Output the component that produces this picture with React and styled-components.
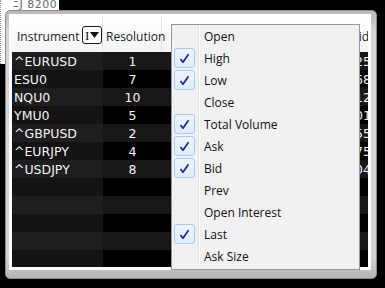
import React from 'react'
import styled, { createGlobalStyle } from 'styled-components'

const Global = createGlobalStyle`
  html, body {
    margin: 0;
    padding: 0;
    background: #000;
  }
`

const Screen = styled.div`
  position: relative;
  width: 385px;
  height: 288px;
  overflow: hidden;
  background: #000;
  padding-top: 10px;
  box-sizing: border-box;
`

const Backdrop = styled.div`
  position: absolute;
  left: 0;
  top: 0;
  width: 58px;
  height: 64px;
  background: #fff;
  border-left: 1px dotted #9a9a9a;
  overflow: hidden;

  span {
    position: absolute;
    left: 12px;
    top: -2px;
    font: 11px 'DejaVu Sans', sans-serif;
    color: #6a6a6a;
    letter-spacing: 0.5px;
  }
`

const Window = styled.div`
  position: relative;
  margin-left: 5px;
  width: 372px;
  height: 269px;
  box-sizing: border-box;
  padding: 3px 5px 8px 3px;
  border: 1px solid #8e8e8e;
  border-radius: 5px;
  background: linear-gradient(#b9b9b9, #d6d6d6 8%, #d2d2d2 92%, #b4b4b4);
`

const Pane = styled.div`
  height: 100%;
  box-sizing: border-box;
  padding: 3px;
  background: #fdfdfd;
`

const Grid = styled.div`
  width: 356px;
  height: 250px;
  overflow: hidden;
  display: flex;
  flex-direction: column;
`

const Header = styled.div`
  display: flex;
  height: 35px;
  flex: none;
  background: linear-gradient(#ffffff, #f4f4f4);
  font: 12px 'Open Sans', sans-serif;
  color: #1b1b1b;
`

const HeadCell = styled.div`
  width: ${p => p.$w}px;
  flex: none;
  display: flex;
  align-items: center;
  justify-content: ${p => p.$right ? 'flex-end' : 'flex-start'};
  gap: 3px;
  box-sizing: border-box;
  padding: 3px ${p => p.$pr || 0}px 0 ${p => p.$pl || 0}px;
  border-right: 1px solid #e3e3e3;
  white-space: nowrap;
`

const Picker = styled.div`
  width: 20px;
  height: 18px;
  box-sizing: border-box;
  border: 1.5px solid #1a1a1a;
  border-radius: 3px;
  background: #fff;
  display: flex;
  align-items: center;
  justify-content: center;
  gap: 1px;
  margin-top: -2px;

  b {
    font: 13px 'Liberation Serif', serif;
    color: #111;
    line-height: 1;
  }
`

const Row = styled.div`
  display: flex;
  height: 18px;
  flex: none;
  background: ${p => p.$odd ? '#000' : '#171717'};
  font: 12.5px 'DejaVu Sans', sans-serif;
  color: #f4f4f4;
`

const Cell = styled.div`
  width: ${p => p.$w}px;
  flex: none;
  display: flex;
  align-items: center;
  box-sizing: border-box;
  justify-content: ${p => p.$align || 'flex-start'};
  padding: 1px ${p => p.$pr || 0}px 0 ${p => p.$pl || 0}px;
  background: ${p => p.$bg || 'transparent'};
  white-space: nowrap;
`

const Menu = styled.div`
  position: absolute;
  left: 165px;
  top: 13px;
  width: 189px;
  box-sizing: border-box;
  padding: 0 0 2px;
  border: 1px solid #979797;
  background: #f1f1f1;
  font: 12px 'Open Sans', sans-serif;
  color: #111;
`

const Item = styled.div`
  display: flex;
  align-items: center;
  height: 22px;
`

const Gutter = styled.div`
  width: 27px;
  height: 22px;
  flex: none;
  display: flex;
  align-items: center;
  padding-left: 2px;
  box-sizing: border-box;
  border-right: 1px solid #e2e3e3;
  box-shadow: 1px 0 0 #fff;
`

const Check = styled.div`
  width: 21px;
  height: 20px;
  box-sizing: border-box;
  border: 1px solid #a9cbf2;
  border-radius: 3px;
  background: linear-gradient(#eef5fd, #dfecfb);
  display: flex;
  align-items: center;
  justify-content: center;
`

const Label = styled.span`
  margin-left: 5px;
`

const rows = [
  ['^EURUSD', '1', '1.2925'],
  ['ESU0', '7', '1068'],
  ['NQU0', '10', '1812'],
  ['YMU0', '5', '10,01'],
  ['^GBPUSD', '2', '1.555'],
  ['^EURJPY', '4', '110.75'],
  ['^USDJPY', '8', '85.04'],
  ['', '', ''],
  ['', '', ''],
  ['', '', ''],
  ['', '', ''],
  ['', '', ''],
]

const items = [
  ['Open', false],
  ['High', true],
  ['Low', true],
  ['Close', false],
  ['Total Volume', true],
  ['Ask', true],
  ['Bid', true],
  ['Prev', false],
  ['Open Interest', false],
  ['Last', true],
  ['Ask Size', false],
]

const Tick = () => (
  <svg width='11' height='11' viewBox='0 0 11 11'>
    <path d='M1.5 6 L4 9.2 L9.5 1.2' fill='none' stroke='#1b2a8f' strokeWidth='1.7' strokeLinejoin='round' />
  </svg>
)

const Caret = () => (
  <svg width='9' height='6' viewBox='0 0 9 6'>
    <path d='M0 0 H9 L4.5 6 Z' fill='#111' />
  </svg>
)

export default function App () {
  return (
    <Screen>
      <Global />
      <Backdrop><span>ﾆJ 8200</span></Backdrop>
      <Window>
        <Pane>
          <Grid>
            <Header>
              <HeadCell $w={91} $pl={5}>
                Instrument
                <Picker><b>I</b><Caret /></Picker>
              </HeadCell>
              <HeadCell $w={59} $pl={3}>Resolution</HeadCell>
              <HeadCell $w={209} $pr={1} $right>Bid</HeadCell>
            </Header>
            {rows.map((r, i) => (
              <Row key={i} $odd={i % 2 === 1}>
                <Cell $w={91} $pl={2} $bg={i % 2 === 1 ? '#131313' : '#1e1e1e'}>{r[0]}</Cell>
                <Cell $w={59} $align='center'>{r[1]}</Cell>
                <Cell $w={210} $align='flex-end' $pr={1}>{r[2]}</Cell>
              </Row>
            ))}
          </Grid>
        </Pane>
        <Menu>
          {items.map(([name, on]) => (
            <Item key={name}>
              <Gutter>{on && <Check><Tick /></Check>}</Gutter>
              <Label>{name}</Label>
            </Item>
          ))}
        </Menu>
      </Window>
    </Screen>
  )
}
